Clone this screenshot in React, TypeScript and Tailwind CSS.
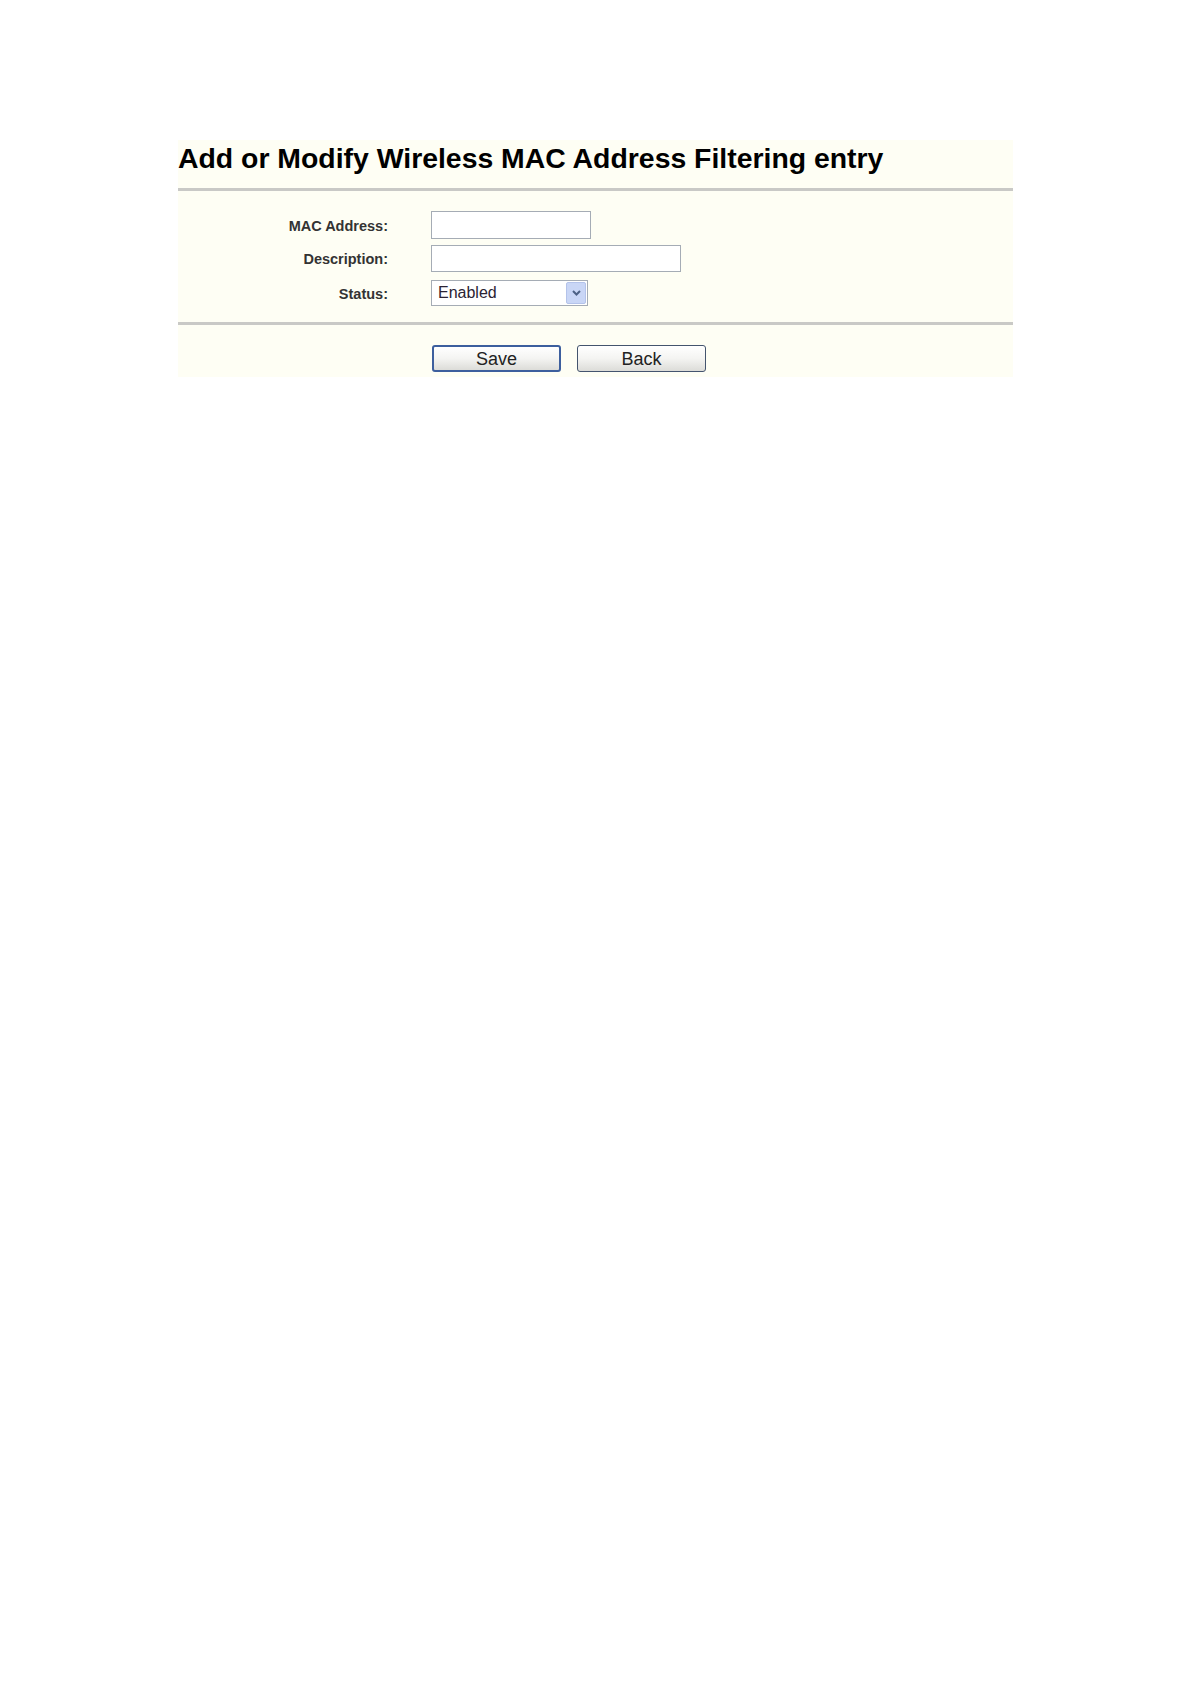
import React from 'react';

const labelCls = 'w-[210px] pt-[3px] text-right text-[14.5px] font-bold text-[#333333]';

function Row({ label, children }: { label: string; children: React.ReactNode }) {
  return (
    <div className="flex items-center">
      <div className={labelCls}>{label}</div>
      <div className="ml-[43px]">{children}</div>
    </div>
  );
}

export default function App() {
  return (
    <div className="min-h-[1684px] w-full bg-white pt-[140px] pl-[178px]" style={{ fontFamily: '"Liberation Sans", Arial, sans-serif' }}>
      <div className="w-[835px] bg-[#fefef4] pb-[5px]">
        {/* Title */}
        <div className="h-[48px] text-[28.4px] font-bold leading-[36px] text-black">
          Add or Modify Wireless MAC Address Filtering entry
        </div>
        <div className="h-[3px] bg-[#c9c9c6]" />

        {/* Form */}
        <div className="flex flex-col gap-[6px] pt-[20px] pb-[16px]">
          <Row label="MAC Address:">
            <div className="h-[28px] w-[160px] border border-[#a5acb5] bg-white" />
          </Row>
          <Row label="Description:">
            <div className="h-[27px] w-[250px] border border-[#a5acb5] bg-white" />
          </Row>
          <div className="mt-[2px]">
            <Row label="Status:">
              <div className="flex h-[26px] w-[157px] items-center border border-[#a5acb5] bg-white p-[1px]">
                <span className="flex-1 pl-[5px] text-[16px] text-[#2b2333]">Enabled</span>
                <span className="flex h-full w-[20px] items-center justify-center rounded-[2px] border border-[#b4c3ea] bg-[#c9d6f6]">
                  <svg width="9" height="6" viewBox="0 0 9 6">
                    <path d="M1 1 L4.5 4.5 L8 1" fill="none" stroke="#4d6185" strokeWidth="2" />
                  </svg>
                </span>
              </div>
            </Row>
          </div>
        </div>
        <div className="h-[3px] bg-[#c9c9c6]" />

        {/* Buttons */}
        <div className="flex gap-[16px] pl-[254px] pt-[20px]">
          <button className="h-[27px] w-[129px] rounded-[3px] border-2 border-[#3d5f9e] bg-gradient-to-b from-white via-[#f4f4f2] to-[#dcdcd8] text-[18px] leading-none text-[#222222]">
            Save
          </button>
          <button className="h-[27px] w-[129px] rounded-[3px] border border-[#44546e] bg-gradient-to-b from-white via-[#f4f4f2] to-[#dcdcd8] text-[18px] leading-none text-[#222222]">
            Back
          </button>
        </div>
      </div>
    </div>
  );
}
